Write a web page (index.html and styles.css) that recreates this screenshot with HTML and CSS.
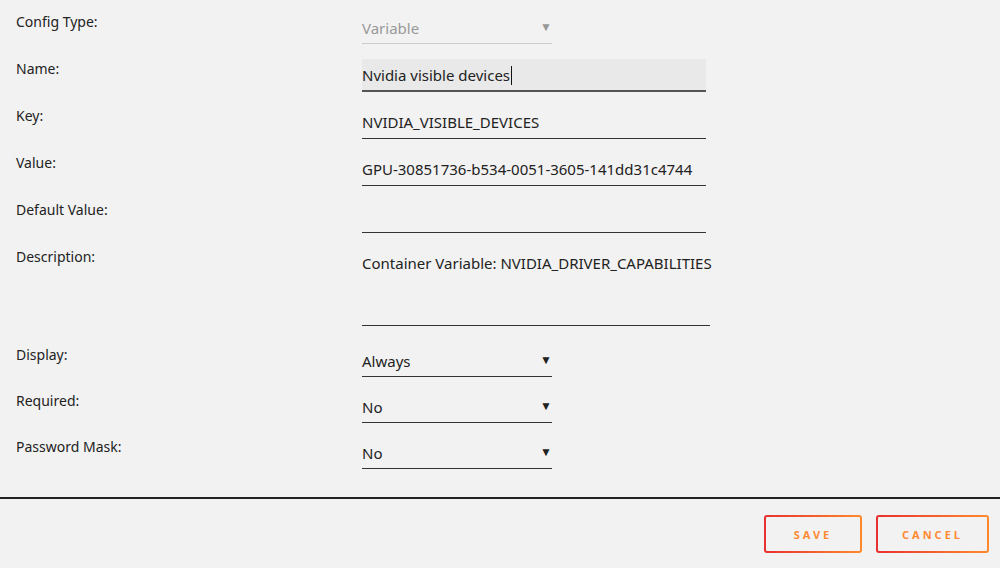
FILE: index.html
```html
<!DOCTYPE html>
<html lang="en">
<head>
    <meta charset="UTF-8">
    <title>Edit Config</title>
    <link rel="stylesheet" href="styles.css">
</head>
<body>
    <!-- Formulário de configuração -->
    <form class="config-form">
        <div class="row first">
            <label class="label">Config Type:</label>
            <div class="field select disabled short">Variable<span class="arrow">▼</span></div>
        </div>
        <div class="row">
            <label class="label">Name:</label>
            <div class="field focused">Nvidia visible devices<span class="caret"></span></div>
        </div>
        <div class="row">
            <label class="label">Key:</label>
            <div class="field">NVIDIA_VISIBLE_DEVICES</div>
        </div>
        <div class="row">
            <label class="label">Value:</label>
            <div class="field">GPU-30851736-b534-0051-3605-141dd31c4744</div>
        </div>
        <div class="row">
            <label class="label">Default Value:</label>
            <div class="field"></div>
        </div>
        <div class="row">
            <label class="label">Description:</label>
            <div class="field textarea">Container Variable: NVIDIA_DRIVER_CAPABILITIES</div>
        </div>
        <div class="row">
            <label class="label">Display:</label>
            <div class="field select short">Always<span class="arrow">▼</span></div>
        </div>
        <div class="row">
            <label class="label">Required:</label>
            <div class="field select short">No<span class="arrow">▼</span></div>
        </div>
        <div class="row">
            <label class="label">Password Mask:</label>
            <div class="field select short">No<span class="arrow">▼</span></div>
        </div>
    </form>

    <!-- Rodapé com botões -->
    <footer class="actions">
        <button class="btn save">Save</button>
        <button class="btn cancel">Cancel</button>
    </footer>
</body>
</html>
```

FILE: styles.css
```css
/* Reset básico */
body, html {
    margin: 0;
    padding: 0;
    width: 100%;
    height: 100%;
    overflow: hidden;
    background: #f2f2f2;
    font-family: 'Noto Sans', 'Open Sans', sans-serif;
    font-size: 14px;
    color: #222;
}

/* Formulário */
.config-form {
    display: flex;
    flex-direction: column;
    gap: 14px;
    padding: 12px 0 0 16px;
    height: 497px;
    box-sizing: border-box;
}

.row {
    display: grid;
    grid-template-columns: 346px 1fr;
    align-items: start;
}

.row.first {
    margin-bottom: 1px;
}

.label {
    line-height: 20px;
    color: #222;
}

.field {
    position: relative;
    width: 344px;
    height: 20px;
    font-size: 15px;
    line-height: 20px;
    padding: 6px 0 6px;
    border-bottom: 1px solid #333;
    white-space: nowrap;
    box-sizing: content-box;
}

.field.focused {
    background: #e9e9e9;
    border-bottom: 2px solid #555;
    padding-bottom: 5px;
}

.caret {
    display: inline-block;
    width: 1px;
    height: 19px;
    background: #111;
    vertical-align: -4px;
    margin-left: 1px;
}

.field.textarea {
    width: 348px;
    height: 72px;
    padding-bottom: 0;
    margin-bottom: 5px;
}

.field.short {
    width: 190px;
    padding-bottom: 5px;
}

.field.disabled {
    color: #999;
    border-bottom-color: #ccc;
}

.select .arrow {
    position: absolute;
    right: 0;
    top: 5px;
    font-size: 12px;
    color: #222;
}

.select.disabled .arrow {
    color: #999;
}

/* Rodapé */
.actions {
    border-top: 2px solid #222;
    display: flex;
    justify-content: flex-end;
    gap: 14px;
    padding: 16px 11px 0 0;
}

.btn {
    height: 38px;
    padding: 0;
    border: 2px solid transparent;
    border-radius: 3px;
    background: linear-gradient(#f2f2f2, #f2f2f2) padding-box,
                linear-gradient(90deg, #e8302f, #ff8a2c) border-box;
    color: #ff8a33;
    font-family: 'Noto Sans', sans-serif;
    font-size: 11px;
    font-weight: bold;
    letter-spacing: 3px;
    text-transform: uppercase;
    cursor: pointer;
}

.btn.save {
    width: 98px;
}

.btn.cancel {
    width: 113px;
}
```
